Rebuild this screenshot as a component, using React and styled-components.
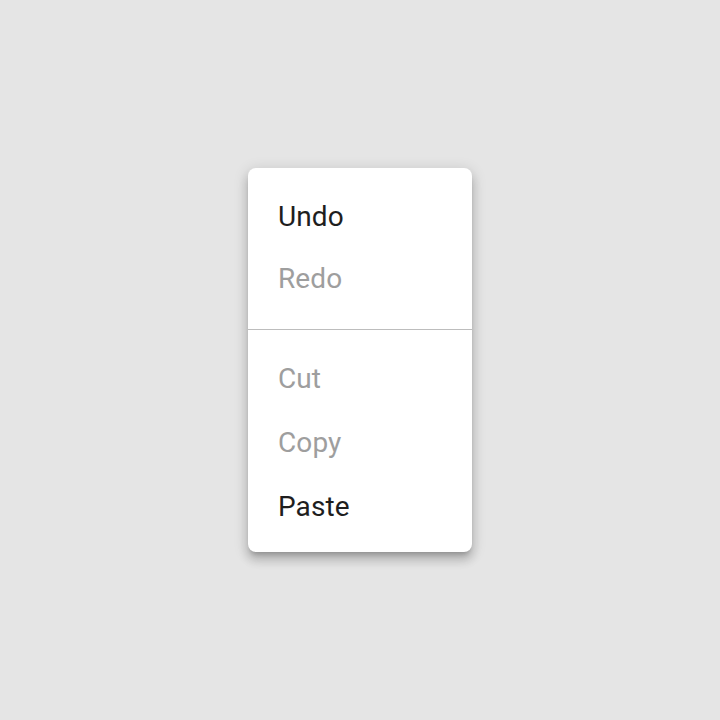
import React from 'react'
import styled, { createGlobalStyle } from 'styled-components'

const Global = createGlobalStyle`
html, body {
  margin: 0;
  padding: 0;
  background: #e5e5e5;
}
body {
  font-family: Roboto, "Noto Sans", sans-serif;
}
`

const Screen = styled.div`
  height: 720px;
  display: flex;
  align-items: center;
  justify-content: center;
`

const Menu = styled.div`
  width: 224px;
  background: #ffffff;
  border-radius: 8px;
  box-shadow: 0 5px 5px -3px rgba(0, 0, 0, 0.2), 0 8px 10px 1px rgba(0, 0, 0, 0.14),
    0 3px 14px 2px rgba(0, 0, 0, 0.12);
  display: flex;
  flex-direction: column;
`

const Group = styled.div`
  padding: ${p => (p.first ? '18px 0 19px' : '17px 0 13px')};
  display: flex;
  flex-direction: column;
`

const Divider = styled.div`
  height: 1px;
  background: #bdbdbd;
`

const Item = styled.div`
  height: ${p => (p.compact ? 62 : 64)}px;
  line-height: ${p => (p.compact ? 62 : 64)}px;
  padding: 0 30px;
  font-size: 28px;
  letter-spacing: 0.1px;
  color: ${p => (p.disabled ? '#9e9e9e' : '#1e1e1e')};
`

const groups = [
  [
    { label: 'Undo' },
    { label: 'Redo', disabled: true }
  ],
  [
    { label: 'Cut', disabled: true },
    { label: 'Copy', disabled: true },
    { label: 'Paste' }
  ]
]

export default function App() {
  return (
    <Screen>
      <Global />
      <Menu>
        {groups.map((items, i) => (
          <React.Fragment key={i}>
            {i > 0 && <Divider />}
            <Group first={i === 0}>
              {items.map(item => (
                <Item key={item.label} disabled={item.disabled} compact={i === 0}>
                  {item.label}
                </Item>
              ))}
            </Group>
          </React.Fragment>
        ))}
      </Menu>
    </Screen>
  )
}
